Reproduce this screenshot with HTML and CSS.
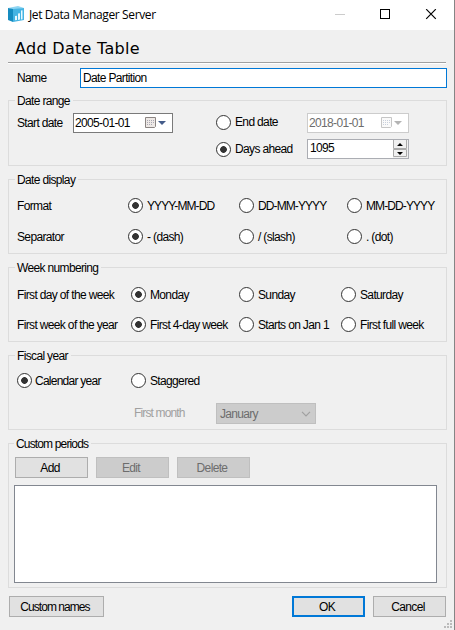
FILE: index.html
```html
<!DOCTYPE html>
<html lang="en">
<head>
<meta charset="utf-8">
<title>Jet Data Manager Server</title>
<link rel="stylesheet" href="styles.css">
</head>
<body>
<div class="window">
  <header class="titlebar">
    <svg class="logo" width="16" height="16" viewBox="0 0 16 16"><path fill="#8fd5f2" d="M0 2 10 0l6 2-10 2z"/><path fill="#168cc0" d="M0 2l5 1v13l-5-2z"/><path fill="#45b4e3" d="M5 3l11-1v12L5 16z"/><path fill="#e9f9ff" d="M7 10l2-.3V14l-2 .3zM10 7.500l2-.3v6.400l-2 .3zM13 4.500l1.500-.2v9L13 13.500z"/></svg>
    <span class="caption">Jet Data Manager Server</span>
    <svg class="controls" width="102" height="12" viewBox="0 0 102 12"><path d="M0 5.500h10" stroke="#ccc"/><rect x="45.500" y=".5" width="9" height="9" fill="none" stroke="#000"/><path d="M91.200.2l9.600 9.600m0-9.600l-9.600 9.600" stroke="#000" stroke-width="1.200"/></svg>
  </header>
  <h1 class="heading">Add Date Table</h1>
  <div class="name-row"><span class="label">Name</span><div class="name-input">Date Partition</div></div>

  <section class="group range">
    <h2 class="legend">Date range</h2>
    <div class="grid">
      <span class="label">Start date</span>
      <div class="field date"><span>2005-01-01</span><svg width="22" height="14" viewBox="0 0 22 14"><path fill="#eee9e6" stroke="#8b8583" d="M.5 1.500h10v9l-1 1h-9z"/><path stroke="#a9a8b4" stroke-dasharray="1 1" d="M2 4.500h7M2 6.500h7M2 8.500h6"/><path fill="#445c8a" d="M13 5h8l-4 4z"/></svg></div>
      <span class="radio">End date</span>
      <div class="field date off"><span>2018-01-01</span><svg width="22" height="14" viewBox="0 0 22 14"><path fill="#fafafa" stroke="#c6c6c6" d="M.5 1.500h10v9l-1 1h-9z"/><path stroke="#c9d0dc" stroke-dasharray="1 1" d="M2 4.500h7M2 6.500h7M2 8.500h6"/><path fill="#b4b4b4" d="M13 5h8l-4 4z"/></svg></div>
      <span class="radio on ahead">Days ahead</span>
      <div class="field spin"><span>1095</span><svg width="15" height="18" viewBox="0 0 15 18"><path fill="#f0f0f0" d="M0 0h15v18H0z"/><path fill="none" stroke="#aaa" d="M.5 0v8.500h13V0M.5 9.500h13v7H.5z"/><path d="M4 6h6L7 3zM4 12h6l-3 3z"/></svg></div>
    </div>
  </section>

  <section class="group display">
    <h2 class="legend">Date display</h2>
    <div class="grid">
      <span class="label">Format</span><span class="radio on caps">YYYY-MM-DD</span><span class="radio caps">DD-MM-YYYY</span><span class="radio caps">MM-DD-YYYY</span>
      <span class="label">Separator</span><span class="radio on">- (dash)</span><span class="radio">/ (slash)</span><span class="radio">. (dot)</span>
    </div>
  </section>

  <section class="group week">
    <h2 class="legend">Week numbering</h2>
    <div class="grid">
      <span class="label">First day of the week</span><span class="radio on">Monday</span><span class="radio">Sunday</span><span class="radio">Saturday</span>
      <span class="label">First week of the year</span><span class="radio on">First 4-day week</span><span class="radio">Starts on Jan 1</span><span class="radio">First full week</span>
    </div>
  </section>

  <section class="group fiscal">
    <h2 class="legend">Fiscal year</h2>
    <div class="years"><span class="radio on">Calendar year</span><span class="radio">Staggered</span></div>
    <div class="month"><span class="label">First month</span><div class="select"><span>January</span><svg width="10" height="6" viewBox="0 0 10 6"><path d="M1 .8l4 4 4-4" fill="none" stroke="#a0a0a0" stroke-width="1.200"/></svg></div></div>
  </section>

  <section class="group custom">
    <h2 class="legend">Custom periods</h2>
    <div class="buttons"><span class="button">Add</span><span class="button disabled">Edit</span><span class="button disabled">Delete</span></div>
    <div class="list"></div>
  </section>

  <footer class="footer"><span class="button names">Custom names</span><span class="button ok">OK</span><span class="button">Cancel</span></footer>
  <svg class="grip" width="9" height="9" viewBox="0 0 9 9"><path fill="#bbb" d="M6 0h2v2H6zM3 3h2v2H3zM6 3h2v2H6zM0 6h2v2H0zM3 6h2v2H3zM6 6h2v2H6z"/></svg>
</div>
</body>
</html>
```
FILE: styles.css
```css
* { box-sizing: border-box; }
body { margin: 0; }
.window {
  position: relative;
  width: 455px;
  height: 630px;
  overflow: hidden;
  background: #f0f0f0;
  border-right: 1px solid #858585;
  font: 12px/14px "Liberation Sans", Arial, sans-serif;
  letter-spacing: -.65px;
  color: #000;
  white-space: nowrap;
}
.titlebar { display: flex; height: 30px; padding: 6px 17px 0 8px; background: #fff; }
.caption { margin-left: 5px; font: 12px/18px "Open Sans", sans-serif; letter-spacing: -.38px; }
.controls { margin: 3px 0 0 auto; }
.logo { flex: none; }
.heading {
  height: 33px;
  margin: 0 8px;
  padding: 9px 0 0 7px;
  border-bottom: 1px solid #a0a0a0;
  box-shadow: 0 1px #fff;
  font: 16px/20px "DejaVu Sans", sans-serif;
  letter-spacing: .3px;
}
.name-row { display: flex; align-items: center; margin: 5px 7px 0 17px; height: 20px; }
.name-row .label { width: 63px; }
.name-input { flex: 1; height: 20px; padding: 2px; border: 1px solid #0078d7; background: #fff; }
.group { width: 439px; margin: 0 0 0 8px; border: 1px solid #dcdcdc; }
.legend {
  width: max-content;
  height: 14px;
  margin: -7px 0 0 6px;
  padding: 0 3px 0 2px;
  background: #f0f0f0;
  font: inherit;
}
.grid { display: grid; align-items: center; padding-left: 8px; }
.range { height: 66px; margin-top: 12px; }
.range .grid { grid-template-columns: 56px 143px 91px 102px; grid-template-rows: 20px 20px; row-gap: 6px; padding-top: 5px; }
.range .radio { margin-top: -2px; }
.range .label { margin-top: -1px; }
.range .ahead { grid-column: 3; margin-top: 0; }
.display { height: 75px; margin-top: 13px; }
.display .grid { grid-template-columns: 111px 111px 108px 90px; grid-template-rows: 31px 31px; padding-top: 3px; }
.week { height: 75px; margin-top: 13px; }
.week .grid { grid-template-columns: 114px 108px 102px 90px; grid-template-rows: 30px 30px; padding-top: 5px; }
.radio { display: flex; align-items: center; gap: 5px; text-indent: -1px; }
.caps { letter-spacing: -.9px; }
.radio::before {
  content: "";
  flex: none;
  width: 13px;
  height: 13px;
  border: 1px solid #333;
  border-radius: 50%;
  background: #fff;
}
.week .radio::before { margin-top: -1px; }
.radio.on::before { background: radial-gradient(circle, #333 0 3px, #fff 3.700px); }
.field { display: flex; height: 20px; border: 1px solid #7a7a7a; background: #fff; }
.date { width: 100px; padding: 2px 5px 0 1px; justify-content: space-between; }
.off { width: 102px; border-color: #ccc; color: #6d6d6d; }
.spin { justify-content: space-between; padding-left: 2px; border-color: #abadb3; }
.spin span { margin-top: 1px; }
.fiscal { height: 75px; margin-top: 13px; }
.years { display: flex; padding: 10px 0 0 8px; }
.years .radio { width: 114px; }
.years .on { gap: 4px; letter-spacing: -.75px; }
.month { display: flex; align-items: center; margin: 15px 0 0 125px; color: #a0a0a0; letter-spacing: -.85px; }
.month .label { width: 82px; margin-top: -2px; }
.select { display: flex; align-items: center; justify-content: space-between; width: 100px; height: 21px; padding: 0 4px 0 3px; border: 1px solid #bfbfbf; background: #ccc; color: #6d6d6d; letter-spacing: -.7px; }
.custom { height: 145px; margin-top: 13px; }
.custom .legend { margin-left: 5px; letter-spacing: -.85px; }
.buttons { display: flex; gap: 8px; margin: 6px 0 0 6px; }
.button { width: 73px; height: 21px; padding-right: 3px; border: 1px solid #adadad; background: #e1e1e1; line-height: 20px; text-align: center; }
.disabled { border-color: #bfbfbf; background: #ccc; color: #6d6d6d; }
.list { width: 423px; height: 98px; margin: 7px 0 0 5px; border: 1px solid #828790; background: #fff; }
.footer { display: flex; gap: 8px; margin: 8px 8px 0 9px; }
.names { width: 95px; margin-right: auto; letter-spacing: -.95px; }
.ok { border: 2px solid #0078d7; line-height: 18px; }
.grip { position: absolute; right: 1px; bottom: 1px; }
```
